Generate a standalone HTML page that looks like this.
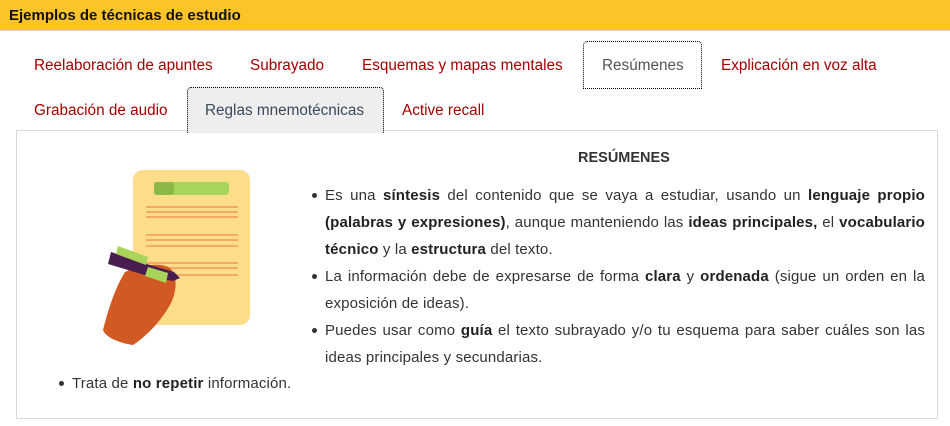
<!DOCTYPE html>
<html><head><meta charset="utf-8"><style>
*{margin:0;padding:0;box-sizing:border-box}
body{width:950px;height:426px;background:#fff;font-family:"Liberation Sans",Arial,sans-serif;position:relative;overflow:hidden}
.hdr{position:absolute;left:0;top:0;width:950px;height:31px;background:#fdc42a;border-bottom:1px solid #d9d9d9;font-weight:bold;font-size:15px;color:#111;padding:7px 0 0 9px}
.t{position:absolute;font-size:15.3px;color:#a30000;white-space:nowrap}
.tab{position:absolute;border:1px dotted #000;border-radius:4px 4px 0 0}
.box{position:absolute;left:16px;top:130px;width:922px;height:289px;border:1px solid #d9d9d9}
.txt{position:absolute;left:325px;top:182px;width:600px;font-size:15px;letter-spacing:0.15px;line-height:27px;color:#333;text-align:justify}
.txt li{list-style:none;position:relative}
.txt li:before,.b:before{content:"";position:absolute;left:-13px;top:11px;width:5px;height:5px;border-radius:50%;background:#333}
b{color:#222}
</style></head><body>
<div class="hdr">Ejemplos de técnicas de estudio</div>
<div class="tab" style="left:583px;top:41px;width:119px;height:48px;background:#fff"></div>
<div class="tab" style="left:187px;top:87px;width:197px;height:46px;background:#eee;border-bottom:none;z-index:2"></div>
<div class="t" style="left:34px;top:57px">Reelaboración de apuntes</div>
<div class="t" style="left:250px;top:57px">Subrayado</div>
<div class="t" style="left:362px;top:57px">Esquemas y mapas mentales</div>
<div class="t" style="left:602px;top:57px;color:#555">Resúmenes</div>
<div class="t" style="left:721px;top:57px">Explicación en voz alta</div>
<div class="t" style="left:34px;top:102px">Grabación de audio</div>
<div class="t" style="left:205px;top:102px;color:#3a4a5a;z-index:3">Reglas mnemotécnicas</div>
<div class="t" style="left:402px;top:102px">Active recall</div>
<div class="box"></div>
<div style="position:absolute;left:578px;top:150px;font-size:14.5px;font-weight:bold;color:#333">RESÚMENES</div>
<svg style="position:absolute;left:0;top:0" width="950" height="426">
<rect x="133" y="170" width="117" height="155" rx="10" fill="#fedd8a"/>
<rect x="154" y="182" width="75" height="13" rx="3" fill="#a8d45a"/>
<rect x="154" y="182" width="20" height="13" rx="3" fill="#8cb848"/>
<g stroke="#f08a50" stroke-width="1.3">
<line x1="146" y1="207" x2="238" y2="207"/><line x1="146" y1="212" x2="238" y2="212"/><line x1="146" y1="217" x2="238" y2="217"/>
<line x1="146" y1="235" x2="238" y2="235"/><line x1="146" y1="240" x2="238" y2="240"/><line x1="146" y1="246" x2="238" y2="246"/>
<line x1="146" y1="263" x2="238" y2="263"/><line x1="146" y1="268" x2="238" y2="268"/><line x1="146" y1="275" x2="238" y2="275"/>
</g>
<path d="M125 272 C140 265 160 262 170 268 C178 275 177 292 170 305 C160 322 148 335 133 345 C120 343 106 338 103 330 C108 310 115 288 125 272 Z" fill="#d15a24"/>
<path d="M111 252 L150 265 L174 272 L180 278 L173 281 L148 276 L108 264 Z" fill="#4a1d50"/>
<path d="M118 246 L148 257 L146 265 L116 254 Z" fill="#a8d45a"/>
<path d="M148 267 L168 273 L166 283 L145 276 Z" fill="#a8d45a"/>
</svg>
<ul class="txt">
<li>Es una <b>síntesis</b> del contenido que se vaya a estudiar, usando un <b>lenguaje propio (palabras y expresiones)</b>, aunque manteniendo las <b>ideas principales,</b> el <b>vocabulario técnico</b> y la <b>estructura</b> del texto.</li>
<li>La información debe de expresarse de forma <b>clara</b> y <b>ordenada</b> (sigue un orden en la exposición de ideas).</li>
<li>Puedes usar como <b>guía</b> el texto subrayado y/o tu esquema para saber cuáles son las ideas principales y secundarias.</li>
</ul>
<div class="b" style="position:absolute;left:72px;top:370px;font-size:15px;letter-spacing:0.15px;line-height:27px;color:#333">Trata de <b>no repetir</b> información.</div>
</body></html>
